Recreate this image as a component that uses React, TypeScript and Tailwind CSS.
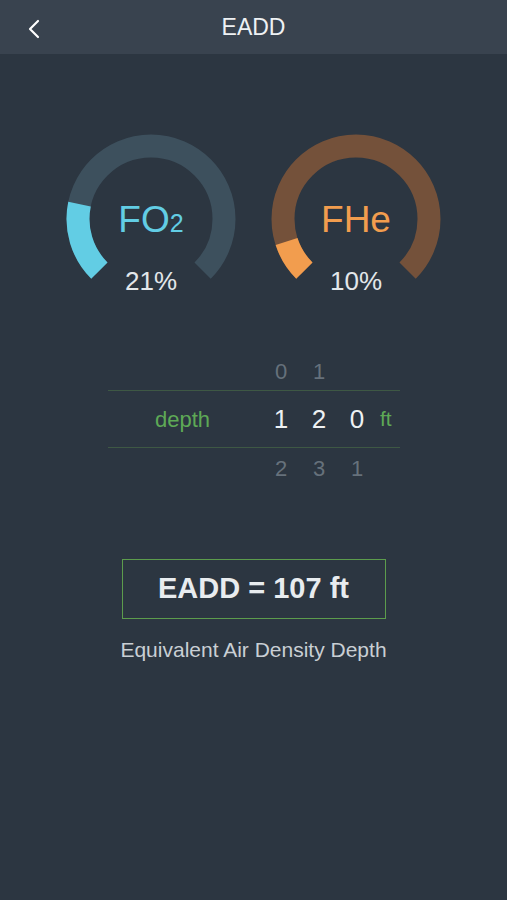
import { ChevronLeft } from 'lucide-react'

const font = { fontFamily: '"Liberation Sans", Arial, sans-serif' }

function arcPath(from: number, to: number, r = 73, c = 85) {
  const rad = (d: number) => (d * Math.PI) / 180
  const x1 = c + r * Math.cos(rad(from))
  const y1 = c + r * Math.sin(rad(from))
  const x2 = c + r * Math.cos(rad(to))
  const y2 = c + r * Math.sin(rad(to))
  const large = to - from > 180 ? 1 : 0
  return `M ${x1} ${y1} A ${r} ${r} 0 ${large} 1 ${x2} ${y2}`
}

interface GaugeProps {
  value: number
  track: string
  fill: string
  label: React.ReactNode
  labelClass: string
}

function Gauge({ value, track, fill, label, labelClass }: GaugeProps) {
  const end = 135 + (value / 100) * 270
  return (
    <div className="relative w-[170px] h-[170px]">
      <svg width="170" height="170" viewBox="0 0 170 170">
        <path d={arcPath(135, 405)} fill="none" stroke={track} strokeWidth="23" />
        <path d={arcPath(135, end)} fill="none" stroke={fill} strokeWidth="23" />
      </svg>
      <div className={`absolute left-0 right-0 top-[64px] text-center text-[37px] leading-[44px] ${labelClass}`}>
        {label}
      </div>
      <div className="absolute left-0 right-0 top-[133px] text-center text-[26px] leading-[28px] text-[#e3e7ea]">
        {value}%
      </div>
    </div>
  )
}

export default function App() {
  return (
    <div className="w-[507px] h-[900px] bg-[#2c3641] flex flex-col" style={font}>
      <div className="h-[54px] bg-[#39434f] relative flex items-center justify-center shrink-0">
        <ChevronLeft className="absolute left-[18px] top-[13px] w-[32px] h-[32px] text-white" strokeWidth={1.6} />
        <span className="text-[23px] text-[#eef1f3]">EADD</span>
      </div>

      <div className="flex justify-center gap-[35px] mt-[80px]">
        <Gauge
          value={21}
          track="#3d505d"
          fill="#62cde4"
          labelClass="text-[#62cde4]"
          label={<span>FO<span className="text-[25px]">2</span></span>}
        />
        <Gauge value={10} track="#74513a" fill="#f29d4e" labelClass="text-[#f29d4e]" label="FHe" />
      </div>

      <div className="ml-[108px] w-[292px] mt-[48px] text-[22px]">
        <div className="h-[38px] flex items-center text-[#66717b]">
          <div className="w-[154px]" />
          <div className="w-[38px] text-center">0</div>
          <div className="w-[38px] text-center">1</div>
        </div>
        <div className="h-[58px] flex items-center border-y border-[#3e5844]">
          <div className="w-[154px] pl-[47px] text-[#5ea956] text-[22px]">depth</div>
          <div className="w-[38px] text-center text-[#eef1f3] text-[26px]">1</div>
          <div className="w-[38px] text-center text-[#eef1f3] text-[26px]">2</div>
          <div className="w-[38px] text-center text-[#eef1f3] text-[26px]">0</div>
          <div className="pl-[4px] text-[#5ea956] text-[21px]">ft</div>
        </div>
        <div className="h-[40px] flex items-center text-[#66717b]">
          <div className="w-[154px]" />
          <div className="w-[38px] text-center">2</div>
          <div className="w-[38px] text-center">3</div>
          <div className="w-[38px] text-center">1</div>
        </div>
      </div>

      <div className="mt-[71px] mx-auto w-[264px] h-[60px] border border-[#5c9c4c] flex items-center justify-center">
        <span className="text-[29px] font-bold text-[#e8ecef]">EADD = 107 ft</span>
      </div>
      <div className="mt-[15px] text-center text-[21px] text-[#c9cfd4]">Equivalent Air Density Depth</div>
    </div>
  )
}
